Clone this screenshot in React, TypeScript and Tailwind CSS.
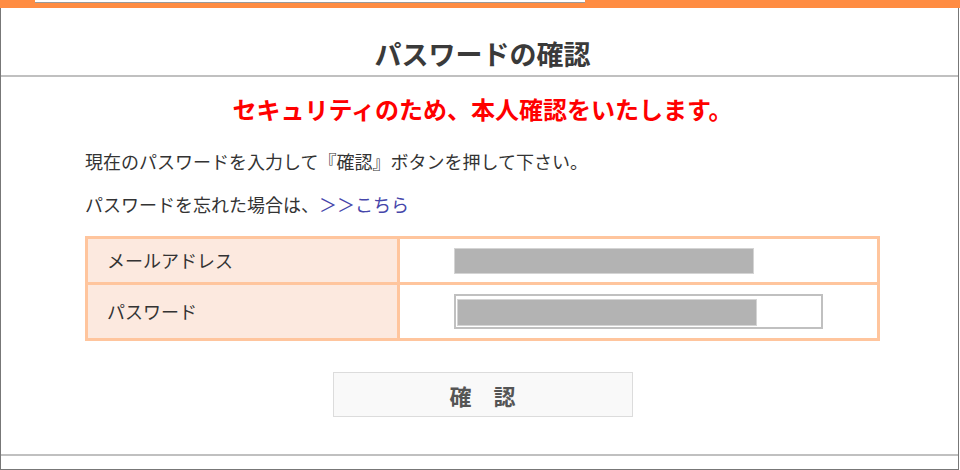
import React from 'react';

const font = { fontFamily: '"Noto Sans CJK JP", "Noto Sans", sans-serif' };

const App: React.FC = () => {
  return (
    <div className="w-[960px] h-[470px] bg-white text-[#333]" style={font}>
      {/* Top orange bar */}
      <div className="h-[8px] w-full bg-[#ff8c42]">
        <div className="ml-[35px] w-[550px] h-[3px] bg-white border-b border-[#9a9a9a]" />
      </div>

      <div className="w-[959px] h-[462px] border-x border-b border-[#777] flex flex-col">
        {/* Header */}
        <div className="h-[69px] border-b-2 border-[#c0c0c0] flex items-end pb-[2px]">
          <div className="ml-[84px] w-[795px] text-center text-[27px] leading-[39px] font-bold text-[#3a3a3a]">
            パスワードの確認
          </div>
        </div>

        {/* Body */}
        <div className="ml-[84px] w-[795px] flex flex-col">
          <p className="mt-[14px] text-center text-[24px] leading-[36px] font-bold text-[#ff0000]">
            セキュリティのため、本人確認をいたします。
          </p>
          <p className="mt-[20px] text-[18px] leading-[28px]">
            現在のパスワードを入力して『確認』ボタンを押して下さい。
          </p>
          <p className="mt-[15px] text-[18px] leading-[28px]">
            パスワードを忘れた場合は、<a className="text-[#4646aa]">＞＞こちら</a>
          </p>

          {/* Form table */}
          <div className="mt-[18px] border-[3px] border-[#ffc59d] flex flex-col">
            <div className="flex h-[46px] border-b-[3px] border-[#ffc59d]">
              <div className="w-[312px] border-r-[3px] border-[#ffc59d] bg-[#fce9df] flex items-center pl-[19px] text-[18px]">
                メールアドレス
              </div>
              <div className="flex-1 flex items-center pl-[54px]">
                <div className="w-[300px] h-[26px] bg-[#b3b3b3] border border-[#d4d4d4]" />
              </div>
            </div>
            <div className="flex h-[53px]">
              <div className="w-[312px] border-r-[3px] border-[#ffc59d] bg-[#fce9df] flex items-center pl-[19px] text-[18px]">
                パスワード
              </div>
              <div className="flex-1 flex items-center pl-[54px]">
                <div className="w-[369px] h-[35px] border-2 border-[#c0c0c0] bg-white pl-[1px] pt-[3px]">
                  <div className="w-[300px] h-[27px] bg-[#b3b3b3] border border-[#d4d4d4]" />
                </div>
              </div>
            </div>
          </div>

          {/* Submit */}
          <div className="mt-[31px] flex justify-center">
            <button className="w-[300px] h-[45px] bg-[#f9f9f9] border border-[#dcdcdc] text-[22px] font-bold text-[#555] leading-none">
              確　認
            </button>
          </div>
        </div>

        <div className="mt-[37px] h-[2px] bg-[#c0c0c0]" />
      </div>
    </div>
  );
};

export default App;
